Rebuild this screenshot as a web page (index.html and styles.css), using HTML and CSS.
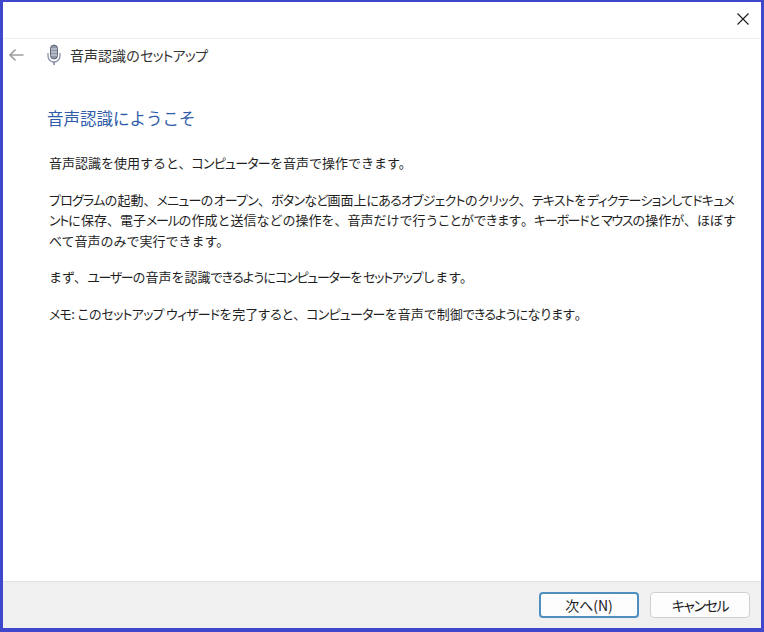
FILE: index.html
```html
<!DOCTYPE html>
<html lang="ja">
<head>
<meta charset="utf-8">
<title>音声認識のセットアップ</title>
<link rel="stylesheet" href="styles.css">
</head>
<body>
<div class="window">
  <div class="titlebar">
    <svg class="close" width="14" height="14" viewBox="0 0 14 14"><path d="M1.5 1.5L12.5 12.5M12.5 1.5L1.5 12.5" stroke="#1a1a1a" stroke-width="1.1" fill="none"/></svg>
  </div>
  <div class="navbar">
    <svg class="back" width="16" height="14" viewBox="0 0 16 14"><path d="M15.500 7H2M7.5 1.5L2 7l5.500 5.500" stroke="#a0a0a0" stroke-width="1.7" fill="none"/></svg>
    <svg class="mic" width="16" height="22" viewBox="0 0 16 22">
      <rect x="4.500" y="1" width="7" height="14" rx="3.500" fill="#8f96a8" stroke="#5f6675"/>
      <path d="M5 5h6M5 8h6M5 11h6" stroke="#d8dbe4" stroke-width="1"/>
      <path d="M2 9v3a6 6 0 0 0 12 0V9" stroke="#8a93ad" stroke-width="1.300" fill="none"/>
      <path d="M8 18v3" stroke="#7a8299" stroke-width="1.500"/>
    </svg>
    <span class="navtitle">音声認識の<span class="k">セットアップ</span></span>
  </div>
  <main class="content">
    <h1 class="heading">音声認識にようこそ</h1>
    <p class="para">音声認識を使用すると、<span class="k">コンピューター</span>を音声で操作できます。</p>
    <p class="para"><span class="k">プログラム</span>の起動、<span class="k">メニュー</span>の<span class="k">オープン</span>、<span class="k">ボタン</span><span class="h">など</span>画面上<span class="h">にある</span><span class="k">オブジェクト</span>の<span class="k">クリック</span>、<span class="k">テキスト</span>を<span class="k">ディクテーション</span><span class="h">して</span><span class="k">ドキュメ</span><br><span class="tight"><span class="k">ント</span>に保存、電子<span class="k">メール</span>の作成と送信などの操作を、音声だけで行う<span class="p">ことができます</span>。<span class="k">キーボード</span>と<span class="k">マウス</span>の操作が、ほぼす</span><br>べて音声のみで実行できます。</p>
    <p class="para tight">まず、<span class="k">ユーザー</span>の音声を認識<span class="h">できるように</span><span class="k">コンピューター</span>を<span class="k">セットアップ</span>します。</p>
    <p class="para"><span class="k">メモ</span>: <span class="p">この</span><span class="k">セットアップ ウィザード</span>を完了<span class="p">すると</span>、<span class="k">コンピューター</span>を音声で制御<span class="h">できるように</span><span class="p">なります</span>。</p>
  </main>
  <footer class="footer">
    <button class="btn btn-primary">次へ(N)</button>
    <button class="btn tight-label"><span class="k">キャンセル</span></button>
  </footer>
</div>
</body>
</html>
```
FILE: styles.css
```css
html, body {
  margin: 0;
  padding: 0;
  height: 100%;
}
body {
  font-family: "Noto Sans CJK JP", "Liberation Sans", sans-serif;
  font-size: 12px;
  color: #1a1a1a;
  background: #fff;
}
.k {
  font-feature-settings: "palt";
  letter-spacing: var(--k-spacing, -0.06em);
}
.h {
  font-feature-settings: "palt";
  letter-spacing: -0.06em;
}
.p {
  font-feature-settings: "palt";
}
.tight {
  --k-spacing: -0.1em;
}
.tight-label {
  --k-spacing: -0.1em;
}
.window {
  box-sizing: border-box;
  width: 764px;
  height: 632px;
  border: solid #3f48cc;
  border-width: 2px 3px 4px 3px;
  display: flex;
  flex-direction: column;
  background: #fff;
}
.titlebar {
  height: 37px;
  flex: none;
  display: flex;
  justify-content: flex-end;
  align-items: center;
  padding: 0 11px 2px 0;
  border-bottom: 1px solid #f0f0f0;
  box-sizing: border-box;
}
.navbar {
  height: 34px;
  flex: none;
  display: flex;
  align-items: center;
  padding: 0 0 2px 5px;
  box-sizing: border-box;
}
.back { margin-right: 22px; }
.mic { margin-right: 8px; }
.navtitle {
  font-size: 14px;
  color: #333;
}
.content {
  flex: 1;
  padding: 0 10px 0 46px;
}
.heading {
  margin: 33px 0 23px -2px;
  font-size: 16.500px;
  line-height: 24px;
  font-weight: 400;
  color: #2f5ca8;
}
.para {
  margin: 0 0 16px;
  font-size: 13px;
  line-height: 20.500px;
  color: #1f1f1f;
  white-space: nowrap;
}
.footer {
  height: 47px;
  flex: none;
  box-sizing: border-box;
  background: #f0f0f0;
  border-top: 1px solid #e2e2e2;
  display: flex;
  justify-content: flex-end;
  align-items: center;
  gap: 11px;
  padding: 0 11px 0 0;
}
.btn {
  width: 100px;
  height: 26px;
  box-sizing: border-box;
  border: 1px solid #d0d0d0;
  border-radius: 4px;
  background: #fdfdfd;
  font-family: inherit;
  font-size: 14px;
  color: #1a1a1a;
  padding: 0;
}
.btn-primary {
  border: 2px solid #4d8fc0;
}
```
